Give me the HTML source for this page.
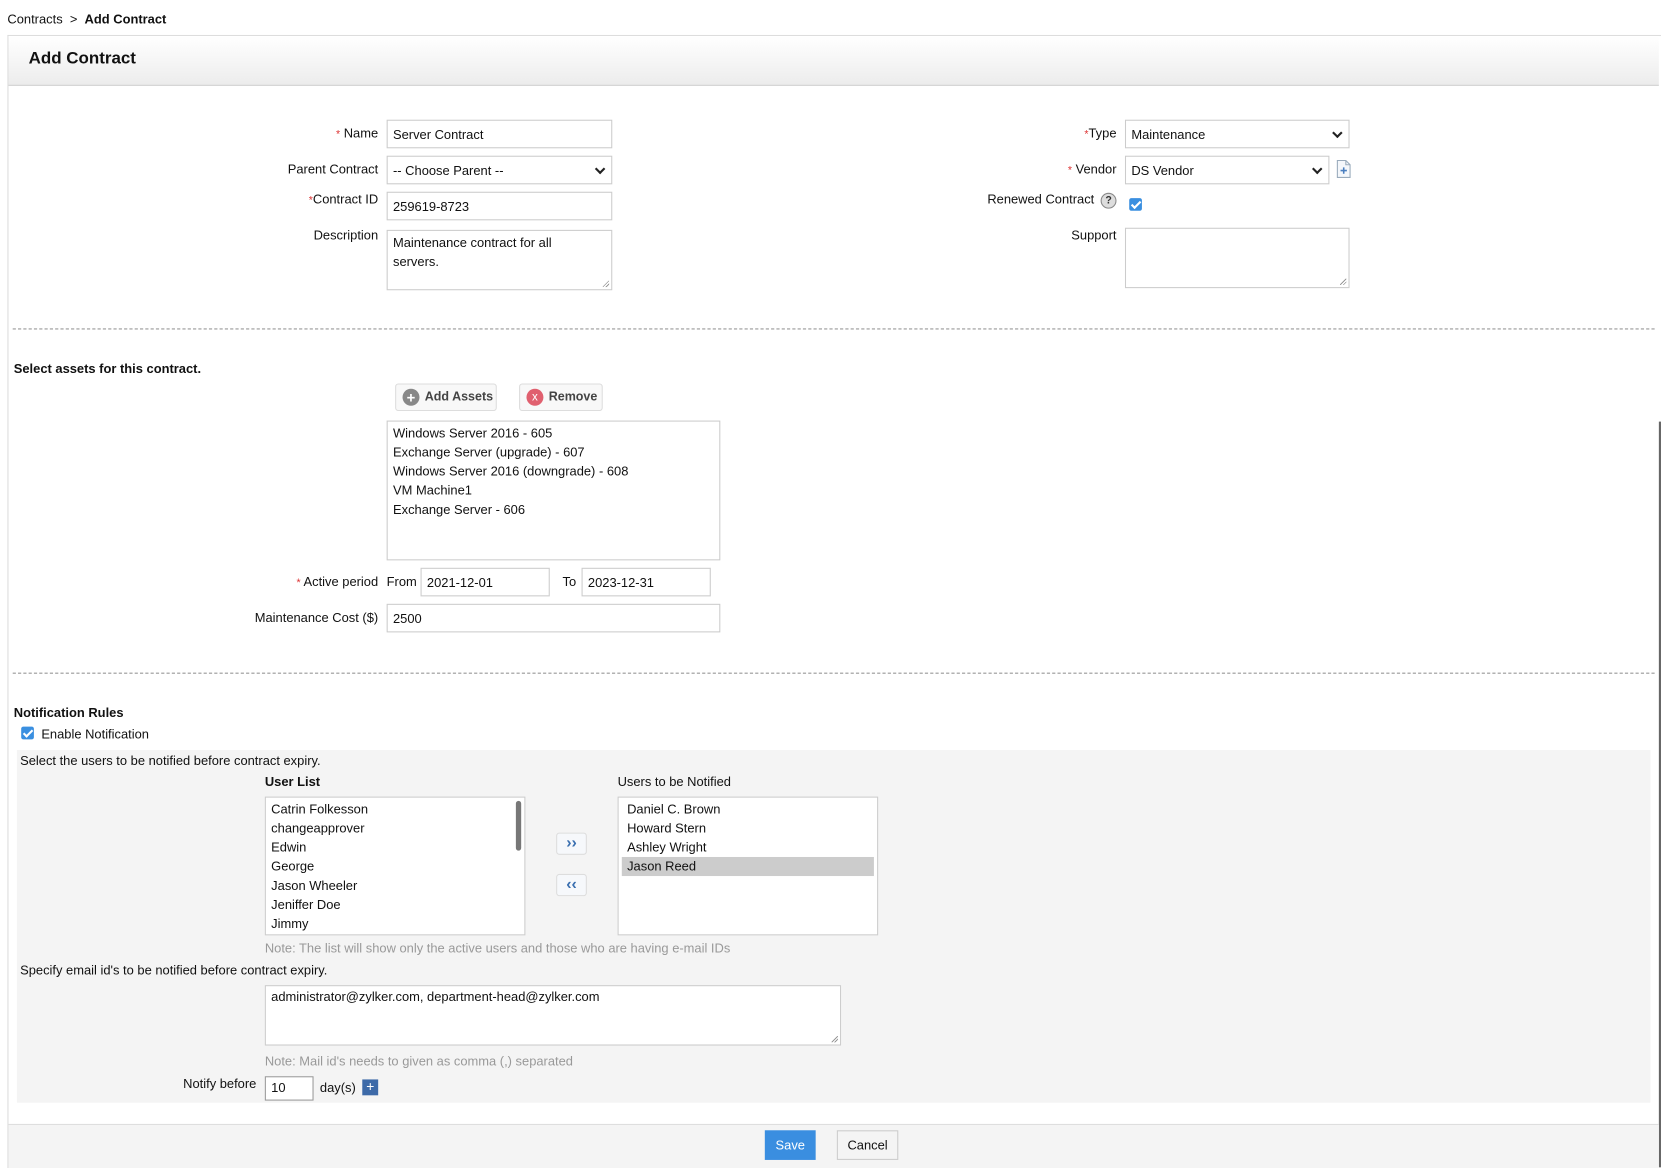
<!DOCTYPE html>
<html><head><meta charset="utf-8">
<style>
html,body{margin:0;padding:0;width:1661px;height:1167px;overflow:hidden;background:#fff;}
#s{position:absolute;left:0;top:0;width:1568px;height:1102px;transform:scale(1.0593);transform-origin:0 0;font-family:"Liberation Sans",Arial,sans-serif;font-size:12.2px;color:#111;}
.a{position:absolute;white-space:nowrap;}
.r{position:absolute;text-align:right;white-space:nowrap;}
.box{position:absolute;border:1px solid #ccc;background:#fff;box-sizing:border-box;}
.in{padding:0 5px;line-height:26px;}
.st{color:#d33;font-size:10px;}
.sel:after{content:"";position:absolute;right:7px;top:8px;width:5px;height:5px;border-right:2px solid #222;border-bottom:2px solid #222;transform:rotate(45deg);}
.dot{position:absolute;left:12px;width:1550px;border-top:1px dashed #999;}
.list div{line-height:18px;padding-left:5px;}
.cb{position:absolute;width:12px;height:12px;background:#3a8fe0;border-radius:2px;}
.cb:after{content:"";position:absolute;left:4px;top:1px;width:3px;height:7px;border-right:2px solid #fff;border-bottom:2px solid #fff;transform:rotate(45deg);}
.btn{position:absolute;border:1px solid #ddd;border-radius:3px;background:#f8f8f8;box-sizing:border-box;}
.grip{position:absolute;right:2px;bottom:2px;width:6px;height:6px;background:linear-gradient(135deg,transparent 45%,#999 45%,#999 55%,transparent 55%,transparent 70%,#999 70%,#999 80%,transparent 80%);}
</style></head><body><div id="s">
<div class="a" style="left:7px;top:11px;">Contracts &nbsp;&gt; &nbsp;<b>Add Contract</b></div>
<div style="position:absolute;left:7px;top:33px;width:1560px;height:1069px;border-left:1px solid #ddd;border-top:1px solid #ddd;"></div>
<div style="position:absolute;left:8px;top:34px;width:1558px;height:46px;background:linear-gradient(#fff,#ececec);border-bottom:1px solid #ccc;"></div>
<div class="a" style="left:27px;top:47px;font-size:16px;font-weight:bold;">Add Contract</div>
<div style="position:absolute;left:1566px;top:398px;width:2px;height:704px;background:#666;"></div>

<div class="r" style="right:1211px;top:119px;"><span class="st">*</span> Name</div>
<div class="box in" style="left:365px;top:113px;width:213px;height:27px;">Server Contract</div>
<div class="r" style="right:1211px;top:153px;">Parent Contract</div>
<div class="box in sel" style="left:365px;top:147px;width:213px;height:27px;">-- Choose Parent --</div>
<div class="r" style="right:1211px;top:181px;"><span class="st">*</span>Contract ID</div>
<div class="box in" style="left:365px;top:181px;width:213px;height:27px;">259619-8723</div>
<div class="r" style="right:1211px;top:215px;">Description</div>
<div class="box" style="left:365px;top:217px;width:213px;height:57px;padding:2px 5px;line-height:18px;">Maintenance contract for all<br>servers.<div class="grip"></div></div>

<div class="r" style="right:514px;top:119px;"><span class="st">*</span>Type</div>
<div class="box in sel" style="left:1062px;top:113px;width:212px;height:27px;">Maintenance</div>
<div class="r" style="right:514px;top:153px;"><span class="st">*</span> Vendor</div>
<div class="box in sel" style="left:1062px;top:147px;width:193px;height:27px;">DS Vendor</div>
<svg class="a" style="left:1261px;top:150px;" width="15" height="19"><path d="M1.5 1.5h8l4 4v12h-12z" fill="#f4f7fb" stroke="#9ab"/><path d="M9.5 1.5v4h4" fill="none" stroke="#9ab"/><path d="M7.5 8v6M4.5 11h6" stroke="#4a7fc0" stroke-width="1.5"/></svg>
<div class="r" style="right:535px;top:181px;">Renewed Contract</div>
<div class="a" style="left:1039px;top:182px;width:13px;height:13px;border-radius:50%;border:1px solid #888;background:#ddd;font-size:10px;font-weight:bold;text-align:center;line-height:13px;color:#333;">?</div>
<div class="cb" style="left:1066px;top:187px;"></div>
<div class="r" style="right:514px;top:215px;">Support</div>
<div class="box" style="left:1062px;top:215px;width:212px;height:57px;"><div class="grip"></div></div>

<div class="dot" style="top:310px;"></div>
<div class="a" style="left:13px;top:341px;font-weight:bold;">Select assets for this contract.</div>
<div class="btn" style="left:373px;top:362px;width:96px;height:26px;"></div>
<div class="a" style="left:380px;top:367px;width:16px;height:16px;border-radius:50%;background:#888;color:#fff;font-weight:bold;text-align:center;line-height:16px;font-size:14px;">+</div>
<div class="a" style="left:401px;top:367px;font-weight:bold;color:#444;font-size:11.8px;">Add Assets</div>
<div class="btn" style="left:490px;top:362px;width:79px;height:26px;"></div>
<div class="a" style="left:497px;top:367px;width:16px;height:16px;border-radius:50%;background:#e0606f;color:#fff;text-align:center;line-height:16px;font-size:11px;">x</div>
<div class="a" style="left:518px;top:367px;font-weight:bold;color:#444;font-size:11.8px;">Remove</div>
<div class="box list" style="left:365px;top:397px;width:315px;height:132px;padding-top:2px;"><div>Windows Server 2016 - 605</div><div>Exchange Server (upgrade) - 607</div><div>Windows Server 2016 (downgrade) - 608</div><div>VM Machine1</div><div>Exchange Server - 606</div></div>
<div class="r" style="right:1211px;top:542px;"><span class="st">*</span> Active period</div>
<div class="a" style="left:365px;top:542px;">From</div>
<div class="box in" style="left:397px;top:536px;width:122px;height:27px;">2021-12-01</div>
<div class="a" style="left:531px;top:542px;">To</div>
<div class="box in" style="left:549px;top:536px;width:122px;height:27px;">2023-12-31</div>
<div class="r" style="right:1211px;top:576px;">Maintenance Cost ($)</div>
<div class="box in" style="left:365px;top:570px;width:315px;height:27px;">2500</div>

<div class="dot" style="top:635px;"></div>
<div class="a" style="left:13px;top:666px;font-weight:bold;">Notification Rules</div>
<div class="cb" style="left:20px;top:686px;"></div>
<div class="a" style="left:39px;top:686px;">Enable Notification</div>
<div style="position:absolute;left:16px;top:708px;width:1542px;height:333px;background:#f4f4f4;"></div>
<div class="a" style="left:19px;top:711px;">Select the users to be notified before contract expiry.</div>
<div class="a" style="left:250px;top:731px;font-weight:bold;">User List</div>
<div class="box list" style="left:250px;top:752px;width:246px;height:131px;padding-top:2px;"><div>Catrin Folkesson</div><div>changeapprover</div><div>Edwin</div><div>George</div><div>Jason Wheeler</div><div>Jeniffer Doe</div><div>Jimmy</div><div style="position:absolute;right:3px;top:3px;width:5px;height:47px;background:#777;border-radius:3px;padding:0;"></div></div>
<div class="btn" style="left:525px;top:786px;width:29px;height:21px;background:#f6f8fb;color:#3a6fb0;font-weight:bold;text-align:center;line-height:18px;font-size:15px;">&#8250;&#8250;</div>
<div class="btn" style="left:525px;top:825px;width:29px;height:21px;background:#f6f8fb;color:#3a6fb0;font-weight:bold;text-align:center;line-height:18px;font-size:15px;">&#8249;&#8249;</div>
<div class="a" style="left:583px;top:731px;">Users to be Notified</div>
<div class="box list" style="left:583px;top:752px;width:246px;height:131px;padding:2px 3px 0;"><div>Daniel C. Brown</div><div>Howard Stern</div><div>Ashley Wright</div><div style="background:#ccc;">Jason Reed</div></div>
<div class="a" style="left:250px;top:888px;color:#999;">Note: The list will show only the active users and those who are having e-mail IDs</div>
<div class="a" style="left:19px;top:909px;">Specify email id's to be notified before contract expiry.</div>
<div class="box" style="left:250px;top:930px;width:544px;height:57px;padding:3px 5px;">administrator@zylker.com, department-head@zylker.com<div class="grip"></div></div>
<div class="a" style="left:250px;top:995px;color:#999;">Note: Mail id's needs to given as comma (,) separated</div>
<div class="r" style="right:1326px;top:1016px;">Notify before</div>
<div class="box in" style="left:250px;top:1016px;width:46px;height:23px;border-color:#999;line-height:21px;">10</div>
<div class="a" style="left:302px;top:1020px;">day(s)</div>
<div class="a" style="left:342px;top:1019px;width:15px;height:15px;background:#3d6aa8;color:#fff;text-align:center;line-height:14px;font-size:13px;">+</div>

<div style="position:absolute;left:8px;top:1061px;width:1558px;height:41px;background:#f4f4f4;border-top:1px solid #ddd;"></div>
<div class="a" style="left:722px;top:1067px;width:48px;height:28px;background:#3a8ee0;color:#fff;text-align:center;line-height:28px;">Save</div>
<div class="btn" style="left:790px;top:1067px;width:58px;height:28px;background:#f4f4f4;border-color:#ccc;border-radius:0;text-align:center;line-height:26px;">Cancel</div>
</div></body></html>
